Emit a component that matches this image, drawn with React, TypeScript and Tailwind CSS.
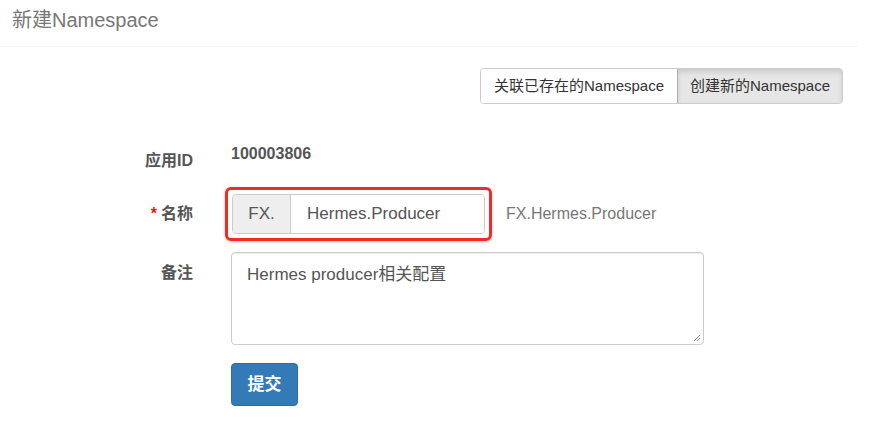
import React from 'react'

const font = { fontFamily: '"Liberation Sans", "Noto Sans CJK SC", sans-serif' }

const App: React.FC = () => {
  return (
    <div className="w-[881px] h-[436px] bg-white overflow-hidden" style={font}>
      {/* header */}
      <div className="w-[858px] h-[47px] border-b border-[#f2f2f8] px-[12px] pt-[7px]">
        <h1 className="text-[20px] leading-[26px] text-[#777]">新建Namespace</h1>
      </div>

      {/* toggle */}
      <div className="flex justify-end pr-[38px] pt-[21px]">
        <div className="flex h-[36px] text-[15px] text-[#333] rounded-[4px] border border-[#ccc] overflow-hidden">
          <button className="w-[196px] bg-white">关联已存在的Namespace</button>
          <button className="w-[165px] bg-[#e6e6e6] border-l border-[#adadad] shadow-[inset_0_3px_5px_rgba(0,0,0,0.125)]">创建新的Namespace</button>
        </div>
      </div>

      {/* form */}
      <div className="flex flex-col pt-[35px]">
        <div className="flex items-start h-[38px]">
          <label className="w-[193px] text-right text-[16px] font-bold text-[#555] pt-[10px]">应用ID</label>
          <div className="ml-[38px] text-[16px] font-bold text-[#555] pt-[3px]">100003806</div>
        </div>

        <div className="flex items-center mt-[10px] h-[54px]">
          <label className="w-[193px] text-right text-[16px] font-bold text-[#555]">
            <span className="text-[#e02020] mr-[4px]">*</span>名称
          </label>
          <div className="ml-[32px] p-[4px] border-[3px] border-[#ec2d25] rounded-[6px] shadow-[0_1px_3px_rgba(0,0,0,0.25)]">
            <div className="flex h-[40px] w-[253px] rounded-[4px] border border-[#ccc] overflow-hidden text-[17px] text-[#555]">
              <span className="w-[58px] bg-[#eee] border-r border-[#ccc] flex items-center justify-center">FX.</span>
              <span className="flex-1 bg-white flex items-center pl-[16px]">Hermes.Producer</span>
            </div>
          </div>
          <div className="ml-[14px] text-[16px] text-[#777]">FX.Hermes.Producer</div>
        </div>

        <div className="flex items-start mt-[11px]">
          <label className="w-[193px] text-right text-[16px] font-bold text-[#555] pt-[9px]">备注</label>
          <div className="ml-[38px] relative w-[473px] h-[93px] rounded-[4px] border border-[#ccc] px-[15px] py-[9px] text-[17px] text-[#555] shadow-[inset_0_1px_1px_rgba(0,0,0,0.075)]">
            Hermes producer相关配置
            <svg className="absolute right-[2px] bottom-[2px]" width="8" height="8" viewBox="0 0 8 8">
              <path d="M7 1L1 7M7 4L4 7" stroke="#888" strokeWidth="1" />
            </svg>
          </div>
        </div>

        <div className="flex mt-[18px]">
          <div className="w-[193px]" />
          <button className="ml-[38px] w-[67px] h-[43px] rounded-[4px] bg-[#337ab7] border border-[#2e6da4] text-white text-[17px] font-bold">提交</button>
        </div>
      </div>
    </div>
  )
}

export default App
